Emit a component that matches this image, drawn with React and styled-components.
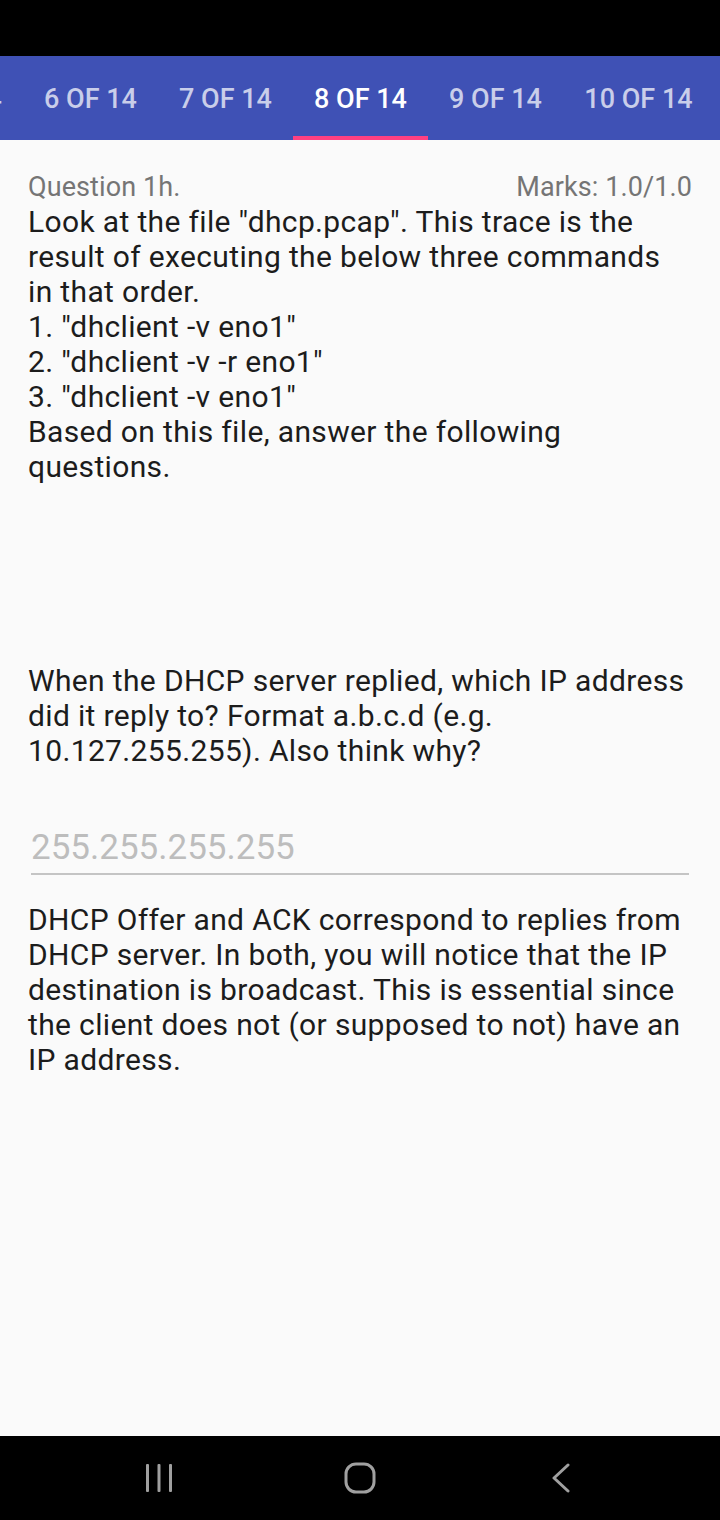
import React from "react";
import styled, { createGlobalStyle } from "styled-components";

const Global = createGlobalStyle`
  html, body { margin: 0; padding: 0; background: #fafafa; }
  body { font-family: Roboto, "Noto Sans", sans-serif; }
  * { box-sizing: border-box; }
`;

const Screen = styled.div`
  width: 720px;
  height: 1520px;
  display: flex;
  flex-direction: column;
  background: #fafafa;
  overflow: hidden;
`;

const StatusBar = styled.div`
  height: 56px;
  background: #000;
  flex: none;
`;

const TabBar = styled.div`
  height: 84px;
  background: #3f51b5;
  flex: none;
  overflow: hidden;
  display: flex;
`;

const TabStrip = styled.div`
  display: flex;
  margin-left: -112px;
`;

const Tab = styled.div`
  width: ${(p) => p.$w}px;
  flex: none;
  display: flex;
  align-items: center;
  justify-content: center;
  padding-top: 2px;
  position: relative;
  white-space: nowrap;
  font-family: Roboto, sans-serif;
  font-weight: 500;
  font-size: 27px;
  color: ${(p) => (p.$active ? "#fff" : "rgba(255,255,255,0.72)")};
  &::after {
    content: "";
    position: absolute;
    left: 0;
    right: 0;
    bottom: 0;
    height: 4px;
    background: ${(p) => (p.$active ? "#ff4081" : "transparent")};
  }
`;

const Content = styled.div`
  flex: 1;
  padding: 30px 28px 0 28px;
  display: flex;
  flex-direction: column;
`;

const HeaderRow = styled.div`
  display: flex;
  justify-content: space-between;
  align-items: center;
  font-family: Roboto, sans-serif;
  font-size: 27px;
  letter-spacing: 0.1px;
  line-height: 34px;
  color: #757575;
`;

const Para = styled.div`
  font-family: Roboto, sans-serif;
  font-size: 30px;
  letter-spacing: 0.35px;
  line-height: 35px;
  color: #1c1c1c;
  margin-top: ${(p) => p.$mt || 0}px;
`;

const Field = styled.div`
  margin: 60px 3px 0 3px;
  padding-bottom: 5px;
  border-bottom: 2px solid #c4c4c4;
  font-family: Roboto, sans-serif;
  font-size: 35px;
  line-height: 40px;
  color: #bdbdbd;
`;

const NavBar = styled.div`
  height: 84px;
  background: #000;
  flex: none;
  display: flex;
  align-items: center;
  justify-content: center;
`;

const NavCell = styled.div`
  width: 201px;
  display: flex;
  justify-content: center;
  align-items: center;
`;

const NavIcon = styled.svg`
  display: block;
`;

const tabs = [
  { label: "5 OF 14", w: 135 },
  { label: "6 OF 14", w: 135 },
  { label: "7 OF 14", w: 135 },
  { label: "8 OF 14", w: 135, active: true },
  { label: "9 OF 14", w: 135 },
  { label: "10 OF 14", w: 151 },
];
const iconColor = "#a0a0a0";

export default function App() {
  return (
    <>
      <Global />
      <Screen>
        <StatusBar />
        <TabBar>
          <TabStrip>
            {tabs.map((t) => (
              <Tab key={t.label} $w={t.w} $active={t.active}>
                {t.label}
              </Tab>
            ))}
          </TabStrip>
        </TabBar>
        <Content>
          <HeaderRow>
            <span>Question 1h.</span>
            <span>Marks: 1.0/1.0</span>
          </HeaderRow>
          <Para>
            Look at the file "dhcp.pcap". This trace is the result of executing the below three commands in that order.
            <br />
            1. "dhclient -v eno1"
            <br />
            2. "dhclient -v -r eno1"
            <br />
            3. "dhclient -v eno1"
            <br />
            Based on this file, answer the following questions.
          </Para>
          <Para $mt={179}>
            When the DHCP server replied, which IP address did it reply to? Format a.b.c.d (e.g. 10.127.255.255). Also think why?
          </Para>
          <Field>255.255.255.255</Field>
          <Para $mt={27}>
            DHCP Offer and ACK correspond to replies from DHCP server. In both, you will notice that the IP destination is broadcast. This is essential since the client does not (or supposed to not) have an IP address.
          </Para>
        </Content>
        <NavBar>
          <NavCell>
            <NavIcon width="28" height="28" viewBox="0 0 28 28">
              <rect x="1" y="0" width="3" height="28" rx="1" fill={iconColor} />
              <rect x="12.5" y="0" width="3" height="28" rx="1" fill={iconColor} />
              <rect x="24" y="0" width="3" height="28" rx="1" fill={iconColor} />
            </NavIcon>
          </NavCell>
          <NavCell>
            <NavIcon width="32" height="32" viewBox="0 0 32 32">
              <rect x="2" y="2" width="28" height="28" rx="10" fill="none" stroke={iconColor} strokeWidth="3" />
            </NavIcon>
          </NavCell>
          <NavCell>
            <NavIcon width="20" height="30" viewBox="0 0 20 30">
              <path d="M17 2 L3 15 L17 28" fill="none" stroke={iconColor} strokeWidth="3" strokeLinecap="round" strokeLinejoin="round" />
            </NavIcon>
          </NavCell>
        </NavBar>
      </Screen>
    </>
  );
}
